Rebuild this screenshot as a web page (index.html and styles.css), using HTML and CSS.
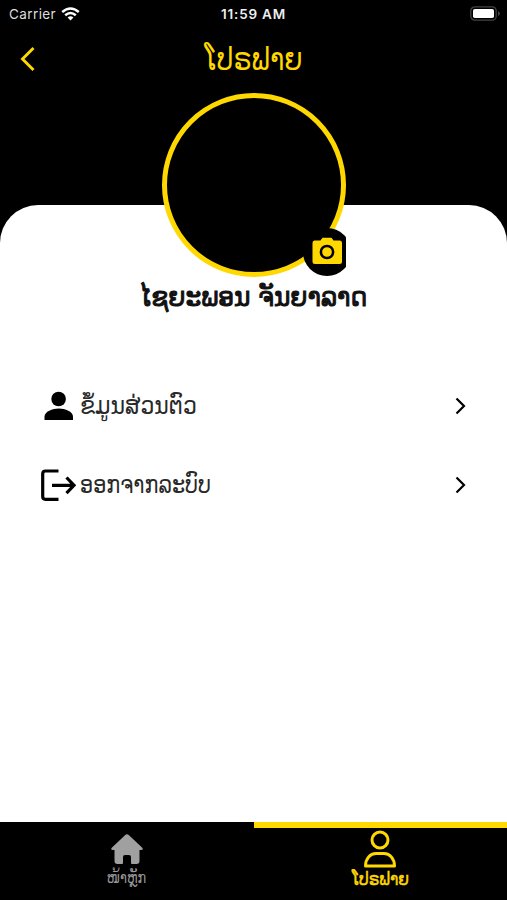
FILE: index.html
```html
<!DOCTYPE html>
<html lang="lo">
<head>
<meta charset="utf-8">
<title>ໂປຣຟາຍ</title>
<link rel="stylesheet" href="styles.css">
</head>
<body>
<div class="app">
  <header class="status">
    <div class="carrier"><span>Carrier</span>
      <svg width="19" height="14" viewBox="0 0 19 14" fill="none" stroke="#fff" stroke-width="2.5"><path d="M1.2 5Q9.5-2 17.8 5M4.2 8.2Q9.5 3.7 14.8 8.2"/><path d="M6.6 10.6Q9.5 8 12.4 10.6L9.5 13.6Z" fill="#fff" stroke="none"/></svg>
    </div>
    <span class="time">11:59 AM</span>
    <svg class="battery" width="31" height="15" viewBox="0 0 31 15"><rect x=".8" y=".8" width="25.4" height="13.4" rx="4" fill="none" stroke="#444" stroke-width="1.3"/><rect x="3" y="3" width="21" height="9" rx="1.8" fill="#fff"/><path d="M28 5v5q2-1 2-2.500t-2-2.500z" fill="#444"/></svg>
  </header>
  <nav class="top">
    <svg width="18" height="26" viewBox="0 0 18 26" fill="none" stroke="#ffd800" stroke-width="2.900"><path d="M15.500 2L4.500 13l11 11"/></svg>
    <h1><span class="fit title">ໂປຣຟາຍ</span></h1>
    <span></span>
  </nav>
  <main class="sheet">
    <div class="avatar">
      <button class="camera" aria-label="camera"><svg width="43" height="48" viewBox="0 0 43 48"><circle cx="24" cy="24" r="24"/><path d="M11.500 12.500h6l2-2.700h9l2 2.700h6q2.500 0 2.500 2.500V33.500q0 2.500-2.500 2.500H12Q9.500 36 9.500 33.500V15Q9.500 12.500 11.500 12.500z" fill="#ffd800"/><circle cx="24" cy="24" r="6.100" fill="none" stroke="#000" stroke-width="2.500"/></svg></button>
    </div>
    <h2><span class="fit name">ໄຊຍະພອນ ຈັນຍາລາດ</span></h2>
    <ul class="menu">
      <li>
        <svg width="40" height="40" viewBox="0 0 40 40"><circle cx="18.600" cy="13" r="7.300"/><path d="M4.500 34V30.500c0-5 8-8 14.300-8S33 25.500 33 30.500v3.500z"/></svg>
        <span class="label"><span class="fit info">ຂໍ້ມູນສ່ວນຕົວ</span></span>
        <svg class="chevron" width="14" height="20" viewBox="0 0 14 20"><path d="M2.500 2.500L10 10l-7.500 7.500"/></svg>
      </li>
      <li>
        <svg width="40" height="40" viewBox="0 0 40 40" fill="none" stroke="#000" stroke-width="3.200"><path d="M18.500 6H5.500Q2.700 6 2.700 8.800V31.500Q2.700 34.300 5.500 34.300H18.500M12 20.300H34M26.500 12.500L34 20.300L26.500 28.200"/></svg>
        <span class="label"><span class="fit logout">ອອກຈາກລະບົບ</span></span>
        <svg class="chevron" width="14" height="20" viewBox="0 0 14 20"><path d="M2.500 2.500L10 10l-7.500 7.500"/></svg>
      </li>
    </ul>
  </main>
  <footer class="tabs">
    <div class="tab home">
      <svg width="34" height="32" viewBox="0 0 34 32"><path d="M2 14.500L15 2.200q2-1.700 4 0L32 14.500q2 2.500-1 2.500h-1.500V28q0 3-3 3H22q-1 0-1-1v-6q0-2-2-2h-4q-2 0-2 2v6q0 1-1 1H7.500q-3 0-3-3V17H3q-3 0-1-2.500z" fill="#a0a0a0"/></svg>
      <span class="fit tabhome">ໜ້າຫຼັກ</span>
    </div>
    <div class="tab active">
      <svg width="34" height="38" viewBox="0 0 34 38" fill="none" stroke="#ffd800" stroke-width="3"><circle cx="17" cy="10" r="8"/><path d="M2.500 36C2.500 29 7 23.500 13 23.500h8C27 23.500 31.500 29 31.500 36z" stroke-linejoin="round"/></svg>
      <span class="fit tabprofile">ໂປຣຟາຍ</span>
    </div>
  </footer>
</div>
</body>
</html>
```
FILE: styles.css
```css
* { box-sizing: border-box; }
body { margin: 0; background: #000; font-family: "DejaVu Sans", sans-serif; }
svg { display: block; flex: none; }
h1, h2, ul { margin: 0; padding: 0; font-weight: 400; }
.app { width: 507px; height: 900px; display: flex; flex-direction: column; overflow: hidden; }
.status { height: 27px; flex: none; display: grid; grid-template-columns: 1fr auto 1fr; align-items: center; padding: 0 6px 0 9px; color: #eee; font-family: Inter, sans-serif; font-size: 13.5px; }
.carrier { display: flex; gap: 5px; align-items: center; color: #ddd; letter-spacing: .4px; }
.time { font-weight: 600; font-size: 13.5px; letter-spacing: .8px; margin-left: -3px; }
.battery { justify-self: end; }
.top { height: 178px; flex: none; display: grid; grid-template-columns: 1fr auto 1fr; align-items: start; padding: 19px 18px 0; color: #ffd800; }
.top h1 { height: 26px; line-height: 26px; }
.fit { display: inline-block; white-space: nowrap; }
.title { font-size: 28px; transform: translateY(-1px) scale(.95, 1.12); }
.sheet { flex: 1; min-height: 0; background: #fff; border-radius: 38px 38px 0 0; display: flex; flex-direction: column; align-items: center; }
.avatar { position: relative; flex: none; width: 184px; height: 184px; margin-top: -112px; border: 5px solid #ffd800; border-radius: 50%; background: #000; }
.camera { position: absolute; right: -5px; bottom: -4px; border: 0; padding: 0; background: none; overflow: hidden; }
h2 { margin-top: 4px; height: 32px; line-height: 32px; color: #111; }
.name { font-size: 26px; -webkit-text-stroke: 1px #111; transform: scale(.958, 1.03); }
.menu { list-style: none; width: 100%; padding: 60px 39px 0 40px; margin-top: 13px; }
.menu li { display: flex; align-items: center; height: 40px; margin-bottom: 39px; }
.label { flex: 1; line-height: 40px; color: #292929; }
.info, .logout { font-size: 22px; transform-origin: left center; }
.info { transform: translateY(1px) scale(1, 1.1); }
.logout { transform: translateY(1px) scale(.945, 1.1); }
.chevron { fill: none; stroke: #000; stroke-width: 2.2; }
.tabs { flex: none; height: 78px; display: grid; grid-template-columns: 1fr 1fr; background: #000; }
.tab { display: flex; flex-direction: column; align-items: center; line-height: 20px; }
.home { padding-top: 11px; color: #999; }
.active { border-top: 6px solid #ffd800; padding-top: 2px; color: #ffd800; }
.tabhome { font-size: 14px; margin-top: 2px; transform: scale(.92, 1.1); }
.tabprofile { font-size: 16px; -webkit-text-stroke: .5px #ffd800; margin-top: 2px; transform: scale(.97, 1.08); }
```
